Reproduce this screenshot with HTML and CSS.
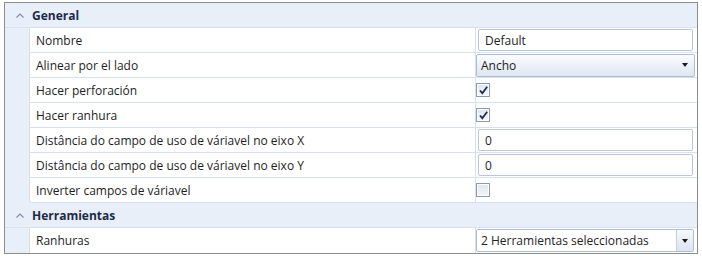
FILE: index.html
```html
<!DOCTYPE html>
<html>
<head>
<meta charset="utf-8">
<link rel="stylesheet" href="styles.css">
</head>
<body>
<div class="grid">
  <div class="cat">
    <span class="chev"><svg width="8" height="5" viewBox="0 0 8 5"><path d="M0.5 4.5 L4 1 L7.5 4.5" fill="none" stroke="#7f8ea8" stroke-width="1.2"/></svg></span>
    <span class="cat-title">General</span>
  </div>
  <div class="row">
    <div class="indent"></div>
    <div class="name">Nombre</div>
    <div class="value"><div class="textbox">Default</div></div>
  </div>
  <div class="row">
    <div class="indent"></div>
    <div class="name">Alinear por el lado</div>
    <div class="value"><div class="combo"><span>Ancho</span><span class="arrow"></span></div></div>
  </div>
  <div class="row">
    <div class="indent"></div>
    <div class="name">Hacer perforación</div>
    <div class="value"><div class="check on"><svg width="11" height="11" viewBox="0 0 11 11"><path d="M2 5.5 L4.3 8.2 L9.2 1.8" fill="none" stroke="#1f2f4f" stroke-width="1.8"/></svg></div></div>
  </div>
  <div class="row">
    <div class="indent"></div>
    <div class="name">Hacer ranhura</div>
    <div class="value"><div class="check on"><svg width="11" height="11" viewBox="0 0 11 11"><path d="M2 5.5 L4.3 8.2 L9.2 1.8" fill="none" stroke="#1f2f4f" stroke-width="1.8"/></svg></div></div>
  </div>
  <div class="row">
    <div class="indent"></div>
    <div class="name">Distância do campo de uso de váriavel no eixo X</div>
    <div class="value"><div class="textbox">0</div></div>
  </div>
  <div class="row">
    <div class="indent"></div>
    <div class="name">Distância do campo de uso de váriavel no eixo Y</div>
    <div class="value"><div class="textbox">0</div></div>
  </div>
  <div class="row">
    <div class="indent"></div>
    <div class="name">Inverter campos de váriavel</div>
    <div class="value"><div class="check"></div></div>
  </div>
  <div class="cat">
    <span class="chev"><svg width="8" height="5" viewBox="0 0 8 5"><path d="M0.5 4.5 L4 1 L7.5 4.5" fill="none" stroke="#7f8ea8" stroke-width="1.2"/></svg></span>
    <span class="cat-title">Herramientas</span>
  </div>
  <div class="row last">
    <div class="indent"></div>
    <div class="name">Ranhuras</div>
    <div class="value"><div class="combo2"><span class="c2text">2 Herramientas seleccionadas</span><span class="btn"><span class="arrow"></span></span></div></div>
  </div>
</div>
</body>
</html>
```
FILE: styles.css
```css
html, body { margin: 0; padding: 0; background: #ffffff; }
body { padding: 2px 0 0 4px; font-family: "Open Sans", "Noto Sans", sans-serif; font-size: 12px; color: #1e1e1e; }
.grid {
  width: 692px;
  height: 250px;
  border: 1px solid #8c8c8c;
  background: #ffffff;
  display: flex;
  flex-direction: column;
}
.cat {
  height: 25px;
  box-sizing: border-box;
  background: #e9eff9;
  border-bottom: 1px solid #d6e0ef;
  display: flex;
  align-items: center;
}
.chev { width: 27px; display: flex; justify-content: center; padding-left: 2px; box-sizing: border-box; }
.chev svg { display: block; }
.cat-title { font-weight: 700; color: #1c2b48; font-size: 12px; }
.row {
  height: 25px;
  display: flex;
}
.indent { width: 24px; background: #e9eff9; flex: none; border-right: 1px solid #d6e0ef; }
.name {
  width: 446px;
  flex: none;
  box-sizing: border-box;
  padding-left: 6px;
  display: flex;
  align-items: center;
  border-bottom: 1px solid #d6e0ef;
  border-right: 1px solid #d6e0ef;
  color: #1e1e1e;
}
.value {
  flex: 1;
  box-sizing: border-box;
  border-bottom: 1px solid #d6e0ef;
  display: flex;
  align-items: center;
  padding: 0 4px 0 0;
}
.row.last .name, .row.last .value { border-bottom: none; }
.textbox {
  margin-left: 2px;
  flex: 1;
  height: 22px;
  box-sizing: border-box;
  border: 1px solid #b9c6d8;
  border-radius: 2px;
  background: #fff;
  padding-left: 6px;
  display: flex;
  align-items: center;
}
.combo {
  flex: 1;
  height: 23px;
  margin-right: -2px;
  box-sizing: border-box;
  border: 1px solid #aebdd2;
  border-radius: 2px;
  background: linear-gradient(#fbfcfe, #dde6f3);
  padding: 0 6px 0 4px;
  display: flex;
  align-items: center;
  justify-content: space-between;
}
.arrow {
  width: 0; height: 0;
  border-left: 3.5px solid transparent;
  border-right: 3.5px solid transparent;
  border-top: 4px solid #1a1a1a;
}
.check {
  width: 14px;
  height: 14px;
  box-sizing: border-box;
  border: 1px solid #8e9ab0;
  background: linear-gradient(#dfe5ee, #f5f7fa);
  box-shadow: inset 0 0 0 1px #ffffff;
  display: flex;
  align-items: center;
  justify-content: center;
}
.check svg { display: block; }
.combo2 {
  flex: 1;
  height: 23px;
  margin-right: -1px;
  box-sizing: border-box;
  border: 1px solid #aebdd2;
  border-radius: 2px;
  background: #fff;
  display: flex;
  align-items: stretch;
}
.c2text { flex: 1; padding-left: 4px; display: flex; align-items: center; }
.btn {
  width: 16px;
  border-left: 1px solid #c3cfdf;
  background: linear-gradient(#f6f8fc, #dbe4f1);
  display: flex;
  align-items: center;
  justify-content: center;
}
```
